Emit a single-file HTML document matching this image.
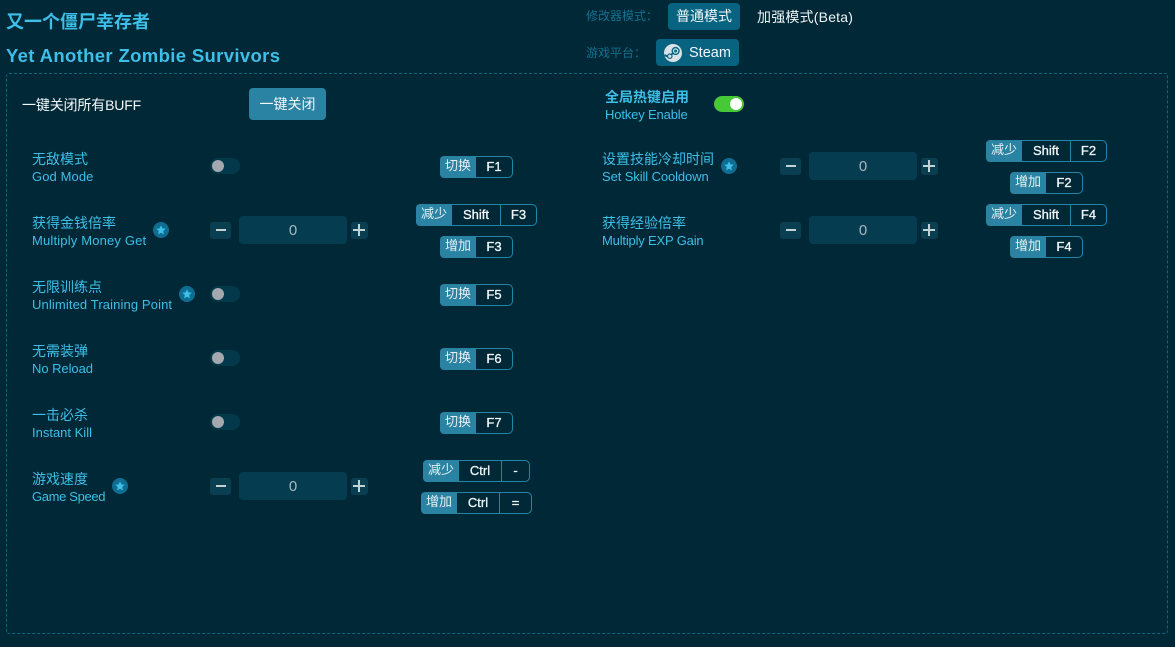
<!DOCTYPE html>
<html><head><meta charset="utf-8"><style>
html,body{margin:0;padding:0;width:1175px;height:647px;overflow:hidden;background:#012836;}
body{position:relative;font-family:"Liberation Sans","Noto Sans CJK SC",sans-serif;}
.a{position:absolute;white-space:nowrap;}
.c{color:#3dbfe8;font-size:14px;line-height:18px;}
.e{font-size:13px;}
.sw{position:absolute;width:30px;height:16px;border-radius:8px;background:#03394b;}
.sw:before{content:"";position:absolute;left:2px;top:2px;width:12px;height:12px;border-radius:50%;background:#a3a9ae;}
.sw.on:before{left:16px;background:#fff;}
.st{position:absolute;width:16px;height:16px;border-radius:50%;background:#0f6d92;}
.st svg{position:absolute;left:3px;top:3px;}
.b{position:absolute;background:#0a3f52;border-radius:3px;width:21px;height:17px;}
.b2{width:17px}
.b i{position:absolute;background:#c4d2d6;}
.num{position:absolute;width:108px;height:28px;background:#053c50;border-radius:4px;color:#a9b8bf;font-size:15px;line-height:29px;text-align:center;}
.k{position:absolute;height:20px;border:1px solid #1f86a8;border-radius:5px;display:flex;color:#f2f8fa;font-size:13px;-webkit-text-stroke:.3px #f2f8fa;line-height:19px;text-align:center;box-sizing:content-box;}
.k span{display:block;box-sizing:border-box;height:20px;}
.k span+span{border-left:1px solid #1f86a8;}
.k span:first-child{background:#2a83a2;border-radius:4px 0 0 4px;color:#e4f0f4;-webkit-text-stroke:0;margin:-1px 0 -1px -1px;height:22px;line-height:20px;font-size:13px;}
.k span:first-child+span{border-left:0;}
</style></head><body>
<div class="a" style="left:6px;top:9px;font-size:18px;line-height:26px;font-weight:bold;color:#3dbfe8;">又一个僵尸幸存者</div>
<div class="a" style="left:6px;top:44px;font-size:18.5px;line-height:23px;font-weight:bold;color:#3dbfe8;letter-spacing:.35px;">Yet Another Zombie Survivors</div>

<div class="a" style="left:586px;top:8px;font-size:12px;line-height:17px;color:#13708f;">修改器模式：</div>
<div class="a" style="left:668px;top:3px;width:72px;height:27px;background:#07637f;border-radius:4px;color:#f2f7f9;font-size:14px;line-height:27px;text-align:center;">普通模式</div>
<div class="a" style="left:757px;top:8px;color:#eef4f6;font-size:14px;line-height:18px;letter-spacing:.2px;">加强模式(Beta)</div>
<div class="a" style="left:586px;top:45px;font-size:12px;line-height:17px;color:#13708f;">游戏平台：</div>
<div class="a" style="left:656px;top:39px;width:83px;height:27px;background:#07637f;border-radius:4px;"></div>
<svg class="a" style="left:664px;top:44px;" width="18" height="18" viewBox="0 0 18 18"><circle cx="9" cy="9" r="9" fill="#d8e2e8"/><path d="M0.3 11 L5.5 13.2" stroke="#07637f" stroke-width="2"/><circle cx="11.6" cy="7" r="3.4" fill="none" stroke="#07637f" stroke-width="1.4"/><circle cx="11.6" cy="7" r="1.5" fill="#07637f"/><path d="M6 11 L10 9" stroke="#07637f" stroke-width="1.6"/><circle cx="5.8" cy="12.2" r="2.2" fill="#d8e2e8" stroke="#07637f" stroke-width="1.2"/></svg>
<div class="a" style="left:689px;top:44px;color:#f2f7f9;font-size:14.5px;line-height:18px;">Steam</div>

<div class="a" style="left:6px;top:73px;width:1162px;height:561px;box-sizing:border-box;border:1px dashed #0f6580;border-radius:3px;"></div>

<div class="a" style="left:22px;top:96px;color:#f4f8fa;font-size:14px;line-height:18px;letter-spacing:-.15px;">一键关闭所有BUFF</div>
<div class="a" style="left:249px;top:88px;width:77px;height:32px;background:#2a83a2;border-radius:4px;color:#f2f7f9;font-size:14px;line-height:32px;text-align:center;">一键关闭</div>
<div class="a" style="left:605px;top:88px;color:#3dbfe8;font-size:14px;line-height:18px;font-weight:bold;">全局热键启用</div>
<div class="a c e" style="left:605px;top:106px;letter-spacing:-.15px;">Hotkey Enable</div>
<div class="sw on" style="left:714px;top:96px;background:#46c837;"></div>

<!-- left column -->
<div class="a c" style="left:32px;top:150px;">无敌模式</div><div class="a c e" style="left:32px;top:168px;letter-spacing:.1px;">God Mode</div>
<div class="sw" style="left:210px;top:158px;"></div>
<div class="k" style="left:440px;top:156px;"><span style="width:36px">切换</span><span style="width:36px">F1</span></div>

<div class="a c" style="left:32px;top:214px;">获得金钱倍率</div><div class="a c e" style="left:32px;top:232px;letter-spacing:.17px;">Multiply Money Get</div>
<div class="st" style="left:153px;top:222px;"><svg width="10" height="10" viewBox="0 0 10 10"><path d="M5 .3 6.4 3.4 9.7 3.8 7.2 6 7.9 9.4 5 7.7 2.1 9.4 2.8 6 .3 3.8 3.6 3.4Z" fill="#3dbfe8"/></svg></div>
<div class="b" style="left:210px;top:222px;"><i style="left:6px;top:7px;width:10px;height:2px;"></i></div>
<div class="num" style="left:239px;top:216px;">0</div>
<div class="b b2" style="left:351px;top:222px;"><i style="left:2px;top:7px;width:12px;height:2px;"></i><i style="left:7px;top:2px;width:2px;height:12px;"></i></div>
<div class="k" style="left:416px;top:204px;"><span style="width:36px">减少</span><span style="width:48px">Shift</span><span style="width:36px">F3</span></div>
<div class="k" style="left:440px;top:236px;"><span style="width:36px">增加</span><span style="width:36px">F3</span></div>

<div class="a c" style="left:32px;top:278px;">无限训练点</div><div class="a c e" style="left:32px;top:296px;letter-spacing:.12px;">Unlimited Training Point</div>
<div class="st" style="left:179px;top:286px;"><svg width="10" height="10" viewBox="0 0 10 10"><path d="M5 .3 6.4 3.4 9.7 3.8 7.2 6 7.9 9.4 5 7.7 2.1 9.4 2.8 6 .3 3.8 3.6 3.4Z" fill="#3dbfe8"/></svg></div>
<div class="sw" style="left:210px;top:286px;"></div>
<div class="k" style="left:440px;top:284px;"><span style="width:36px">切换</span><span style="width:36px">F5</span></div>

<div class="a c" style="left:32px;top:342px;">无需装弹</div><div class="a c e" style="left:32px;top:360px;letter-spacing:-.05px;">No Reload</div>
<div class="sw" style="left:210px;top:350px;"></div>
<div class="k" style="left:440px;top:348px;"><span style="width:36px">切换</span><span style="width:36px">F6</span></div>

<div class="a c" style="left:32px;top:406px;">一击必杀</div><div class="a c e" style="left:32px;top:424px;">Instant Kill</div>
<div class="sw" style="left:210px;top:414px;"></div>
<div class="k" style="left:440px;top:412px;"><span style="width:36px">切换</span><span style="width:36px">F7</span></div>

<div class="a c" style="left:32px;top:470px;">游戏速度</div><div class="a c e" style="left:32px;top:488px;letter-spacing:-.35px;">Game Speed</div>
<div class="st" style="left:112px;top:478px;"><svg width="10" height="10" viewBox="0 0 10 10"><path d="M5 .3 6.4 3.4 9.7 3.8 7.2 6 7.9 9.4 5 7.7 2.1 9.4 2.8 6 .3 3.8 3.6 3.4Z" fill="#3dbfe8"/></svg></div>
<div class="b" style="left:210px;top:478px;"><i style="left:6px;top:7px;width:10px;height:2px;"></i></div>
<div class="num" style="left:239px;top:472px;">0</div>
<div class="b b2" style="left:351px;top:478px;"><i style="left:2px;top:7px;width:12px;height:2px;"></i><i style="left:7px;top:2px;width:2px;height:12px;"></i></div>
<div class="k" style="left:423px;top:460px;"><span style="width:36px">减少</span><span style="width:42px">Ctrl</span><span style="width:28px">-</span></div>
<div class="k" style="left:421px;top:492px;"><span style="width:36px">增加</span><span style="width:42px">Ctrl</span><span style="width:32px">=</span></div>

<!-- right column -->
<div class="a c" style="left:602px;top:150px;">设置技能冷却时间</div><div class="a c e" style="left:602px;top:168px;letter-spacing:-.1px;">Set Skill Cooldown</div>
<div class="st" style="left:721px;top:158px;"><svg width="10" height="10" viewBox="0 0 10 10"><path d="M5 .3 6.4 3.4 9.7 3.8 7.2 6 7.9 9.4 5 7.7 2.1 9.4 2.8 6 .3 3.8 3.6 3.4Z" fill="#3dbfe8"/></svg></div>
<div class="b" style="left:780px;top:158px;"><i style="left:6px;top:7px;width:10px;height:2px;"></i></div>
<div class="num" style="left:809px;top:152px;">0</div>
<div class="b b2" style="left:921px;top:158px;"><i style="left:2px;top:7px;width:12px;height:2px;"></i><i style="left:7px;top:2px;width:2px;height:12px;"></i></div>
<div class="k" style="left:986px;top:140px;"><span style="width:36px">减少</span><span style="width:48px">Shift</span><span style="width:36px">F2</span></div>
<div class="k" style="left:1010px;top:172px;"><span style="width:36px">增加</span><span style="width:36px">F2</span></div>

<div class="a c" style="left:602px;top:214px;">获得经验倍率</div><div class="a c e" style="left:602px;top:232px;letter-spacing:-.18px;">Multiply EXP Gain</div>
<div class="b" style="left:780px;top:222px;"><i style="left:6px;top:7px;width:10px;height:2px;"></i></div>
<div class="num" style="left:809px;top:216px;">0</div>
<div class="b b2" style="left:921px;top:222px;"><i style="left:2px;top:7px;width:12px;height:2px;"></i><i style="left:7px;top:2px;width:2px;height:12px;"></i></div>
<div class="k" style="left:986px;top:204px;"><span style="width:36px">减少</span><span style="width:48px">Shift</span><span style="width:36px">F4</span></div>
<div class="k" style="left:1010px;top:236px;"><span style="width:36px">增加</span><span style="width:36px">F4</span></div>
</body></html>
